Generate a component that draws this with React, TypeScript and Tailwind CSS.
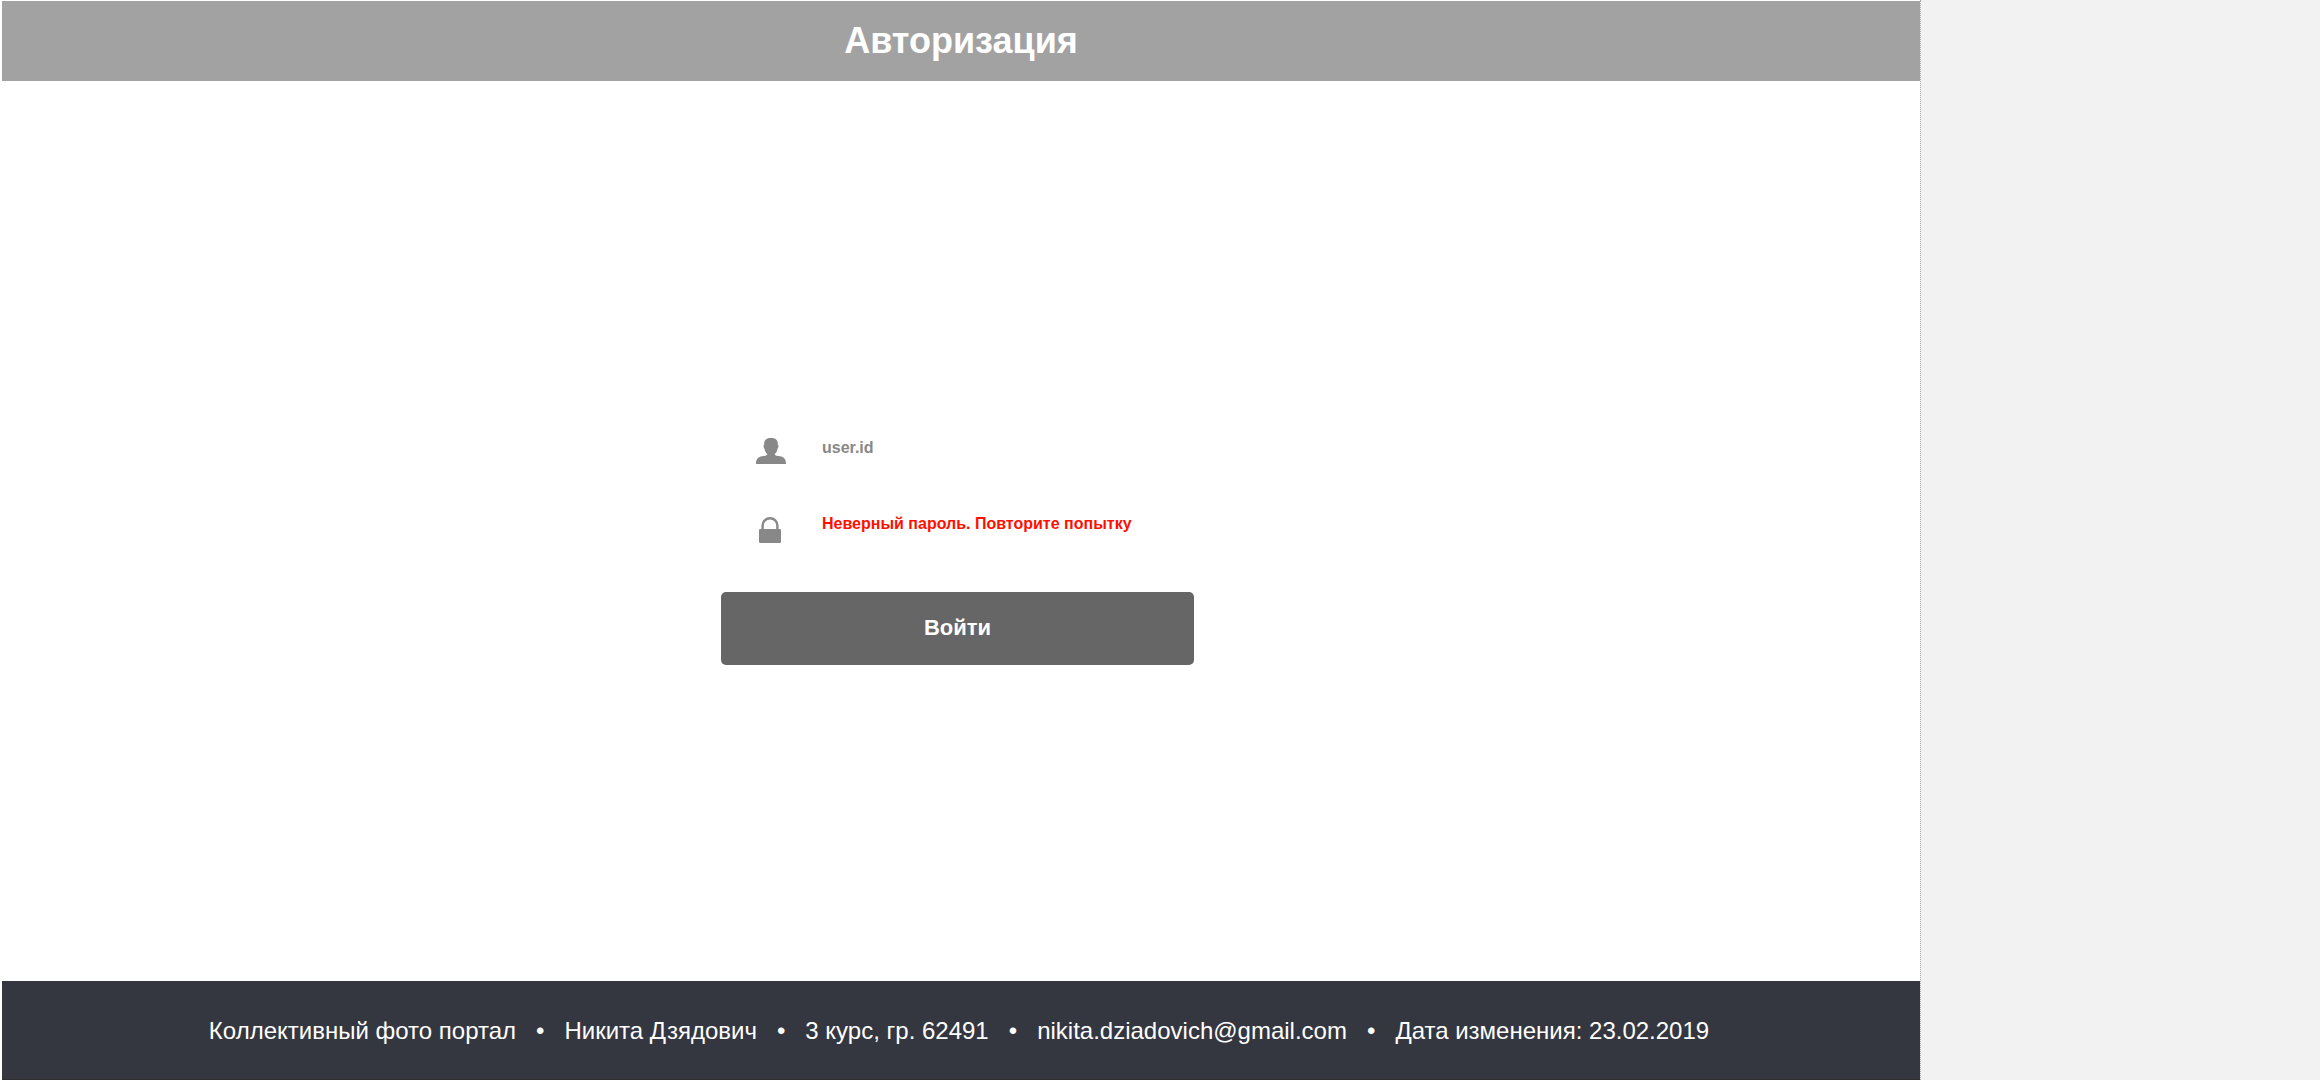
function UserIcon() {
  return (
    <svg viewBox="0 0 30 26" className="h-[26px] w-[30px] fill-[#888888]" aria-hidden="true">
      <path d="M15 0C19.4 0 21.4 1.8 21.7 4.6L21.8 6.8C22.8 7 22.7 9.3 21.7 10.3C21.2 13 20.2 14.8 18.8 15.9V16.7C19.5 17.6 21.5 17.8 24 18.2C28.4 19 30 21.2 30 26H0C0 21.2 1.6 19 6 18.2C8.5 17.8 10.5 17.6 11.2 16.7V15.9C9.8 14.8 8.8 13 8.3 10.3C7.3 9.3 7.2 7 8.2 6.8L8.3 4.6C8.6 1.8 10.6 0 15 0Z" />
    </svg>
  );
}

function LockIcon() {
  return (
    <svg viewBox="0 0 30 26" className="h-[26px] w-[30px]" aria-hidden="true">
      <path d="M6.6 13V8.5A7.4 7.3 0 0 1 21.4 8.5V13" fill="none" stroke="#888888" strokeWidth="2.4" />
      <rect x="3" y="12" width="22" height="14" rx="1.2" fill="#888888" />
    </svg>
  );
}

const footerItems = [
  "Коллективный фото портал",
  "Никита Дзядович",
  "3 курс, гр. 62491",
  "nikita.dziadovich@gmail.com",
  "Дата изменения: 23.02.2019",
];

export default function App() {
  return (
    <div className="flex min-h-screen bg-white font-['Liberation_Sans',Arial,sans-serif]">
      <div className="flex min-w-0 flex-1 flex-col pt-px pl-0.5">
        <header className="flex h-20 items-center justify-center bg-[#a2a2a2]">
          <h1 className="text-4xl font-bold text-white">Авторизация</h1>
        </header>

        <main className="flex flex-1 flex-col items-center justify-center pt-[41px] pr-[7px]">
          <form className="w-full max-w-[473px]" onSubmit={(e) => e.preventDefault()}>
            <div className="flex gap-9 pl-[35px]">
              <div className="flex flex-col gap-[53px]">
                <label htmlFor="user" aria-label="Пользователь">
                  <UserIcon />
                </label>
                <label htmlFor="password" aria-label="Пароль">
                  <LockIcon />
                </label>
              </div>
              <div className="flex min-w-0 flex-1 flex-col gap-14">
                <input
                  id="user"
                  type="text"
                  defaultValue="user.id"
                  className="h-5 w-full bg-transparent text-base font-bold text-[#888888] outline-none"
                />
                <input
                  id="password"
                  type="password"
                  placeholder="Неверный пароль. Повторите попытку"
                  className="h-5 w-full bg-transparent text-base font-bold text-[#888888] outline-none placeholder:text-[#ff0f00]"
                />
              </div>
            </div>
            <button
              type="submit"
              className="mt-[49px] h-[73px] w-full rounded-[5px] bg-[#666666] pb-0.5 text-[22px] font-bold text-white"
            >
              Войти
            </button>
          </form>
        </main>

        <footer className="flex h-[99px] items-center justify-center border-b border-[#2c2c31] bg-[#353740] pt-0.5 pr-1 text-2xl text-white">
          <ul className="flex items-center">
            {footerItems.map((item, i) => (
              <li key={item} className="whitespace-pre">
                {i > 0 && "   •   "}
                {item}
              </li>
            ))}
          </ul>
        </footer>
      </div>
      <aside className="w-[400px] shrink-0 border-l border-dotted border-[#aaaaaa] bg-[#f2f2f2]" />
    </div>
  );
}
